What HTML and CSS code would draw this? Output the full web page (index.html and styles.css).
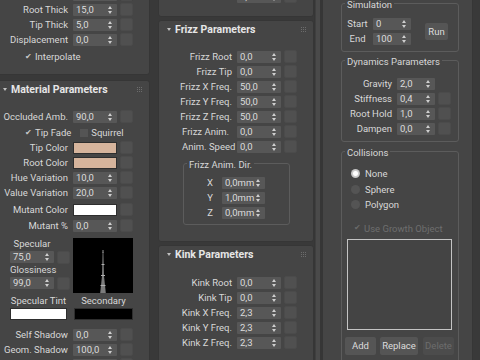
FILE: index.html
```html
<!DOCTYPE html>
<html lang="en">
<head>
    <meta charset="UTF-8">
    <title>Hair and Fur</title>
    <link rel="stylesheet" href="styles.css">
</head>
<body>
    <div class="col col-left">
        <section class="roll roll-general">
            <div class="row"><span class="lbl"></span><span class="spin"></span><span class="sq"></span></div>
            <div class="row"><span class="lbl">Root Thick</span><span class="spin">15,0</span><span class="sq"></span></div>
            <div class="row"><span class="lbl">Tip Thick</span><span class="spin">5,0</span><span class="sq"></span></div>
            <div class="row"><span class="lbl">Displacement</span><span class="spin">0,0</span><span class="sq"></span></div>
            <div class="row check-row interp"><span class="chk on">&#10004;</span>Interpolate</div>
        </section>

        <section class="roll">
            <div class="roll-head">
                <span class="arrow"></span>Material Parameters
                <svg class="grip" width="5" height="5" viewBox="0 0 5 5"><path d="M0 0h1v1H0zM2 0h1v1H2zM4 0h1v1H4zM0 2h1v1H0zM2 2h1v1H2zM4 2h1v1H4zM0 4h1v1H0zM2 4h1v1H2zM4 4h1v1H4z" fill="#6c6c6c"/></svg>
            </div>
            <div class="roll-body mat-body">
                <div class="row"><span class="lbl">Occluded Amb.</span><span class="spin">90,0</span><span class="sq"></span></div>
                <div class="row check-row fade">
                    <span class="chk on">&#10004;</span>Tip Fade
                    <span class="chk squirrel"></span>Squirrel
                </div>
                <div class="row"><span class="lbl">Tip Color</span><span class="swatch tan"></span><span class="sq"></span></div>
                <div class="row"><span class="lbl">Root Color</span><span class="swatch tan"></span><span class="sq"></span></div>
                <div class="row"><span class="lbl">Hue Variation</span><span class="spin">10,0</span><span class="sq"></span></div>
                <div class="row"><span class="lbl">Value Variation</span><span class="spin">20,0</span><span class="sq"></span></div>
                <div class="row mutant"><span class="lbl">Mutant Color</span><span class="swatch white"></span><span class="sq"></span></div>
                <div class="row mutant-pct"><span class="lbl">Mutant %</span><span class="spin">0,0</span><span class="sq"></span></div>

                <div class="spec">
                    <div class="spec-controls">
                        <div class="spec-lbl">Specular</div>
                        <div class="spec-row"><span class="spin">75,0</span><span class="sq"></span></div>
                        <div class="spec-lbl">Glossiness</div>
                        <div class="spec-row"><span class="spin">99,0</span><span class="sq"></span></div>
                    </div>
                    <svg class="spec-graph" width="60" height="55" viewBox="0 0 60 55">
                        <rect width="60" height="55" fill="#000"/>
                        <polygon points="29.6,14 30.4,14 31,38 32.8,55 27.2,55 29,38" fill="#7c7c7c"/>
                        <rect x="29.5" y="12" width="1" height="3" fill="#9a9a9a"/>
                        <rect x="28.5" y="26" width="3" height="1" fill="#b0b0b0"/>
                        <rect x="28" y="37" width="4" height="1" fill="#b0b0b0"/>
                        <rect x="27.5" y="47" width="5" height="1" fill="#b0b0b0"/>
                    </svg>
                </div>

                <div class="tints">
                    <div class="tint"><span class="tint-lbl">Specular Tint</span><span class="tint-box white"></span></div>
                    <div class="tint tint-b"><span class="tint-lbl">Secondary</span><span class="tint-box black"></span></div>
                </div>

                <div class="row shadow"><span class="lbl">Self Shadow</span><span class="spin">0,0</span><span class="sq"></span></div>
                <div class="row"><span class="lbl">Geom. Shadow</span><span class="spin">100,0</span><span class="sq"></span></div>
                <div class="row"><span class="lbl"></span><span class="spin"></span><span class="sq"></span></div>
            </div>
        </section>
    </div>

    <div class="col col-mid">
        <section class="roll roll-top">
            <div class="row"><span class="lbl">Flatness</span><span class="spin">0,0</span><span class="sq"></span></div>
        </section>

        <section class="roll">
            <div class="roll-head">
                <span class="arrow"></span>Frizz Parameters
                <svg class="grip" width="5" height="5" viewBox="0 0 5 5"><path d="M0 0h1v1H0zM2 0h1v1H2zM4 0h1v1H4zM0 2h1v1H0zM2 2h1v1H2zM4 2h1v1H4zM0 4h1v1H0zM2 4h1v1H2zM4 4h1v1H4z" fill="#6c6c6c"/></svg>
            </div>
            <div class="roll-body frizz-body">
                <div class="row"><span class="lbl">Frizz Root</span><span class="spin">0,0</span><span class="sq"></span></div>
                <div class="row"><span class="lbl">Frizz Tip</span><span class="spin">0,0</span><span class="sq"></span></div>
                <div class="row"><span class="lbl">Frizz X Freq.</span><span class="spin">50,0</span><span class="sq"></span></div>
                <div class="row"><span class="lbl">Frizz Y Freq.</span><span class="spin">50,0</span><span class="sq"></span></div>
                <div class="row"><span class="lbl">Frizz Z Freq.</span><span class="spin">50,0</span><span class="sq"></span></div>
                <div class="row"><span class="lbl left">Frizz Anim.</span><span class="spin">0,0</span><span class="sq"></span></div>
                <div class="row"><span class="lbl left">Anim. Speed</span><span class="spin">0,0</span><span class="sq"></span></div>

                <fieldset class="grp dir">
                    <legend>Frizz Anim. Dir.</legend>
                    <div class="row"><span class="axis">X</span><span class="spin">0,0mm</span></div>
                    <div class="row"><span class="axis">Y</span><span class="spin">1,0mm</span></div>
                    <div class="row"><span class="axis">Z</span><span class="spin">0,0mm</span></div>
                </fieldset>
            </div>
        </section>

        <section class="roll">
            <div class="roll-head">
                <span class="arrow"></span>Kink Parameters
                <svg class="grip" width="5" height="5" viewBox="0 0 5 5"><path d="M0 0h1v1H0zM2 0h1v1H2zM4 0h1v1H4zM0 2h1v1H0zM2 2h1v1H2zM4 2h1v1H4zM0 4h1v1H0zM2 4h1v1H2zM4 4h1v1H4z" fill="#6c6c6c"/></svg>
            </div>
            <div class="roll-body kink-body">
                <div class="row"><span class="lbl">Kink Root</span><span class="spin">0,0</span><span class="sq"></span></div>
                <div class="row"><span class="lbl">Kink Tip</span><span class="spin">0,0</span><span class="sq"></span></div>
                <div class="row"><span class="lbl">Kink X Freq.</span><span class="spin">2,3</span><span class="sq"></span></div>
                <div class="row"><span class="lbl">Kink Y Freq.</span><span class="spin">2,3</span><span class="sq"></span></div>
                <div class="row"><span class="lbl">Kink Z Freq.</span><span class="spin">2,3</span><span class="sq"></span></div>
            </div>
        </section>
    </div>

    <div class="scroll-strip"></div>

    <div class="col col-right">
        <section class="roll roll-dyn">
            <fieldset class="grp sim">
                <legend>Simulation</legend>
                <div class="sim-wrap">
                    <div class="sim-rows">
                        <div class="row"><span class="sim-lbl">Start</span><span class="spin short">0</span></div>
                        <div class="row"><span class="sim-lbl">End</span><span class="spin short">100</span></div>
                    </div>
                    <button class="btn run">Run</button>
                </div>
            </fieldset>

            <fieldset class="grp dynp">
                <legend>Dynamics Parameters</legend>
                <div class="row"><span class="dlbl">Gravity</span><span class="spin short">2,0</span></div>
                <div class="row"><span class="dlbl">Stiffness</span><span class="spin short">0,4</span><span class="sq"></span></div>
                <div class="row"><span class="dlbl">Root Hold</span><span class="spin short">1,0</span><span class="sq"></span></div>
                <div class="row"><span class="dlbl">Dampen</span><span class="spin short">0,0</span><span class="sq"></span></div>
            </fieldset>

            <fieldset class="grp coll">
                <legend>Collisions</legend>
                <div class="row radio-row"><span class="radio on"></span>None</div>
                <div class="row radio-row"><span class="radio"></span>Sphere</div>
                <div class="row radio-row"><span class="radio"></span>Polygon</div>
                <div class="row growth"><span class="chk dim">&#10004;</span>Use Growth Object</div>
                <div class="listbox"></div>
                <div class="btn-row">
                    <button class="btn add">Add</button>
                    <button class="btn replace">Replace</button>
                    <button class="btn delete" disabled>Delete</button>
                </div>
            </fieldset>
        </section>
    </div>
</body>
</html>
```

FILE: styles.css
```css
body {
    margin: 0;
    height: 360px;
    overflow: hidden;
    background-color: #393939;
    color: #d8d8d8;
    font-family: Roboto, 'Liberation Sans', sans-serif;
    font-size: 9.5px;
    display: flex;
    align-items: flex-start;
}

.col {
    flex: none;
}

.col-left {
    width: 156px;
    margin-left: -6px;
    margin-right: 8px;
    margin-top: -14px;
}

.col-mid {
    width: 156px;
    margin-top: -12px;
}

.scroll-strip {
    flex: none;
    width: 8px;
    height: 360px;
    background: linear-gradient(to right, #363636 0 1px, #3f3f3f 1px 2px, #4a4a4a 2px 6px, #363636 6px);
}

.col-right {
    width: 151px;
    margin-top: -5px;
}

.roll {
    background-color: #454545;
    border: 1px solid #363636;
    border-radius: 3px;
    margin-bottom: 3px;
}

.col-left .roll {
    margin-bottom: 5px;
}

.roll-general {
    padding-bottom: 10px;
}

.roll-top {
    padding-bottom: 12px;
}

.roll-head {
    display: flex;
    align-items: center;
    height: 17px;
    padding-left: 8px;
    font-size: 10.5px;
    font-weight: bold;
    color: #e6e6e6;
}

.arrow {
    width: 0;
    height: 0;
    border-left: 2.5px solid transparent;
    border-right: 2.5px solid transparent;
    border-top: 3px solid #c0c0c0;
    margin-right: 4px;
}

.grip {
    display: block;
    margin-left: auto;
    margin-right: 7px;
}

.mat-body {
    padding-top: 11px;
}

.frizz-body {
    padding-top: 11px;
    padding-bottom: 16px;
}

.kink-body {
    padding-top: 12px;
    padding-bottom: 40px;
}

.row {
    display: flex;
    align-items: center;
    height: 15px;
}

.lbl {
    width: 73px;
    margin-right: 5px;
    text-align: right;
    white-space: nowrap;
}

.lbl.left {
    text-align: left;
    padding-left: 23px;
    box-sizing: border-box;
}

.spin {
    position: relative;
    box-sizing: border-box;
    width: 44px;
    height: 12px;
    line-height: 12px;
    padding-left: 3px;
    background-color: #575757;
    border-radius: 1px;
    color: #dcdcdc;
}

.spin::before,
.spin::after {
    content: "";
    position: absolute;
    right: 5px;
    border-left: 2px solid transparent;
    border-right: 2px solid transparent;
}

.spin::before {
    top: 2px;
    border-bottom: 3px solid #cfcfcf;
}

.spin::after {
    top: 7px;
    border-top: 3px solid #cfcfcf;
}

.spin.short {
    width: 38px;
}

.sq {
    box-sizing: border-box;
    width: 13px;
    height: 13px;
    margin-left: 3px;
    background-color: #505050;
    border: 1px solid #4b4b4b;
    border-radius: 2px;
}

.swatch {
    box-sizing: border-box;
    width: 44px;
    height: 12px;
    border: 1px solid #2e2e2e;
}

.tan {
    background-color: #d6b49c;
}

.white {
    background-color: #ffffff;
}

.black {
    background-color: #000000;
}

.check-row {
    height: 15px;
}

.interp {
    margin-top: 2px;
    padding-left: 29px;
}

.fade {
    margin-top: 1px;
    padding-left: 29px;
}

.chk {
    box-sizing: border-box;
    width: 8px;
    height: 8px;
    margin-right: 3px;
    font-size: 8px;
    line-height: 8px;
    color: #c8c8c8;
    text-align: center;
}

.chk.squirrel {
    margin-left: 9px;
    background-color: #545454;
    margin-right: 3px;
}

.chk.dim {
    color: #6a6a6a;
}

.mutant {
    margin-top: 2px;
}

.mutant-pct {
    margin-top: 1px;
}

.spec {
    display: flex;
    margin-top: 5px;
}

.spec-controls {
    width: 78px;
    padding-left: 15px;
    box-sizing: border-box;
}

.spec-lbl {
    width: 44px;
    height: 12px;
    line-height: 12px;
    text-align: center;
    white-space: nowrap;
}

.spec-row {
    display: flex;
    align-items: center;
    height: 14px;
}

.spec-graph {
    display: block;
}

.tints {
    display: flex;
    margin-top: 2px;
    padding-left: 15px;
}

.tint {
    display: flex;
    flex-direction: column;
    align-items: center;
    width: 57px;
}

.tint-b {
    width: 59px;
    margin-left: 7px;
}

.tint-lbl {
    height: 12px;
    line-height: 12px;
    white-space: nowrap;
}

.tint-box {
    box-sizing: border-box;
    width: 100%;
    height: 12px;
    margin-top: 1px;
    border: 1px solid #2e2e2e;
}

.shadow {
    margin-top: 7px;
}

.grp {
    box-sizing: border-box;
    margin: 0;
    padding: 0 0 0 3px;
    border: 1px solid #5c5c5c;
    border-radius: 3px;
}

.grp legend {
    padding: 3px 2px 0;
    line-height: 12px;
    color: #d8d8d8;
}

.dir {
    width: 107px;
    margin: 2px 0 0 24px;
    padding-top: 4px;
    padding-bottom: 4px;
}

.axis {
    width: 26px;
    margin-right: 9px;
    text-align: right;
}

.dir .spin {
    width: 43px;
}

.roll-dyn {
    height: 400px;
    padding-left: 18px;
}

.roll-dyn .grp {
    width: 118px;
}

.sim {
    padding-top: 5px;
    padding-bottom: 5px;
}

.sim-wrap {
    display: flex;
    align-items: center;
}

.sim-lbl {
    width: 25px;
    margin-right: 3px;
    text-align: center;
}

.btn {
    font-family: inherit;
    font-size: 9.5px;
    color: #dcdcdc;
    background-color: #555555;
    border: none;
    border-radius: 2px;
    padding: 0;
    height: 18px;
}

.run {
    width: 23px;
    height: 17px;
    margin-left: 14px;
}

.dynp {
    margin-top: 1px;
    padding-top: 8px;
    padding-bottom: 5px;
}

.dlbl {
    width: 47px;
    margin-right: 5px;
    text-align: right;
}

.coll {
    margin-top: 2px;
    padding-top: 7px;
    padding-bottom: 10px;
}

.radio-row {
    height: 15.5px;
}

.radio {
    width: 9px;
    height: 9px;
    margin-left: 6px;
    margin-right: 5px;
    border-radius: 50%;
    background-color: #545454;
}

.radio.on {
    background: radial-gradient(circle, #ffffff 2px, #cfcfcf 3px, #bdbdbd 4.5px);
}

.growth {
    margin-top: 8px;
    padding-left: 8px;
    color: #6e6e6e;
}

.listbox {
    box-sizing: border-box;
    width: 105px;
    height: 91px;
    margin: 3px 0 0 2px;
    background-color: #444444;
    border: 1px solid #c4c4c4;
}

.btn-row {
    display: flex;
    margin-top: 7px;
}

.add {
    width: 31px;
}

.replace {
    width: 38px;
    margin-left: 4px;
}

.delete {
    width: 31px;
    margin-left: 5px;
    color: #6c6c6c;
    background-color: #4c4c4c;
}
```
